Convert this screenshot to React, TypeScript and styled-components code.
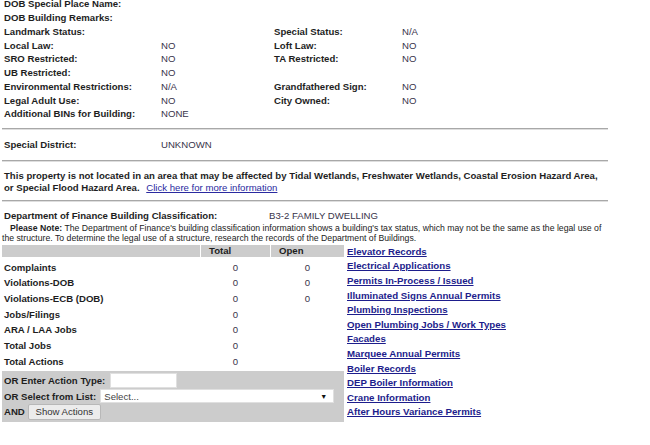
import React from "react";
import styled, { createGlobalStyle } from "styled-components";

const GlobalStyle = createGlobalStyle`
  html, body {
    margin: 0;
    padding: 0;
    background: #ffffff;
  }
  body {
    font-family: "Liberation Sans", Arial, sans-serif;
    font-size: 9.6px;
    color: #1e1e1e;
    overflow: hidden;
  }
`;

const propertyRows: [string, string, string?, string?][] = [
  ["DOB Special Place Name:", ""],
  ["DOB Building Remarks:", ""],
  ["Landmark Status:", "", "Special Status:", "N/A"],
  ["Local Law:", "NO", "Loft Law:", "NO"],
  ["SRO Restricted:", "NO", "TA Restricted:", "NO"],
  ["UB Restricted:", "NO", "", ""],
  ["Environmental Restrictions:", "N/A", "Grandfathered Sign:", "NO"],
  ["Legal Adult Use:", "NO", "City Owned:", "NO"],
  ["Additional BINs for Building:", "NONE"],
];

const stats: [string, string, string][] = [
  ["Complaints", "0", "0"],
  ["Violations-DOB", "0", "0"],
  ["Violations-ECB (DOB)", "0", "0"],
  ["Jobs/Filings", "0", ""],
  ["ARA / LAA Jobs", "0", ""],
  ["Total Jobs", "0", ""],
  ["Total Actions", "0", ""],
];

const links = [
  "Elevator Records",
  "Electrical Applications",
  "Permits In-Process / Issued",
  "Illuminated Signs Annual Permits",
  "Plumbing Inspections",
  "Open Plumbing Jobs / Work Types",
  "Facades",
  "Marquee Annual Permits",
  "Boiler Records",
  "DEP Boiler Information",
  "Crane Information",
  "After Hours Variance Permits",
];

const App = () => {
  return (
    <>
      <GlobalStyle />
      <Page>
        <InfoGrid>
          {propertyRows.map(([l1, v1, l2, v2], i) => (
            <React.Fragment key={i}>
              <Label>{l1}</Label>
              <Value>{v1}</Value>
              <Label>{l2 ?? ""}</Label>
              <Value>{v2 ?? ""}</Value>
            </React.Fragment>
          ))}
        </InfoGrid>
        <Rule $top={7} />
        <PairRow>
          <PairLabel $width={157}>Special District:</PairLabel>
          <Value>UNKNOWN</Value>
        </PairRow>
        <Rule $top={8} />
        <Notice>
          This property is not located in an area that may be affected by Tidal
          Wetlands, Freshwater Wetlands, Coastal Erosion Hazard Area, or Special
          Flood Hazard Area. <NoticeLink href="#">Click here for more information</NoticeLink>
        </Notice>
        <Rule $top={6} />
        <PairRow $top={7}>
          <PairLabel $width={265}>Department of Finance Building Classification:</PairLabel>
          <Value>B3-2 FAMILY DWELLING</Value>
        </PairRow>
        <Note>
          <NoteLead>Please Note:</NoteLead> The Department of Finance's building
          classification information shows a building's tax status, which may not
          be the same as the legal use of the structure. To determine the legal use
          of a structure, research the records of the Department of Buildings.
        </Note>
        <Records>
          <LeftPanel>
            <StatsGrid>
              <HeadCell />
              <HeadCell>Total</HeadCell>
              <HeadCell>Open</HeadCell>
              {stats.map(([name, total, open]) => (
                <React.Fragment key={name}>
                  <StatName>{name}</StatName>
                  <StatNum>{total}</StatNum>
                  <StatNum>{open}</StatNum>
                </React.Fragment>
              ))}
            </StatsGrid>
            <ActionForm>
              <FormRow>
                <FormLabel>OR Enter Action Type:</FormLabel>
                <TextInput type="text" />
              </FormRow>
              <FormRow>
                <FormLabel>OR Select from List:</FormLabel>
                <SelectBox>
                  <span>Select...</span>
                  <Arrow>▼</Arrow>
                </SelectBox>
              </FormRow>
              <FormRow>
                <FormLabel>AND</FormLabel>
                <ShowButton type="button">Show Actions</ShowButton>
              </FormRow>
            </ActionForm>
          </LeftPanel>
          <LinkList>
            {links.map((l) => (
              <RecordLink key={l} href="#">
                {l}
              </RecordLink>
            ))}
          </LinkList>
        </Records>
      </Page>
    </>
  );
};

const Page = styled.div`
  width: 650px;
  margin-top: -3px;
  padding: 0 2px;
  box-sizing: border-box;
`;

const InfoGrid = styled.div`
  display: grid;
  grid-template-columns: 157px 113px 128px 1fr;
  grid-auto-rows: 13.75px;
  align-items: center;
  padding-left: 2px;
`;

const Label = styled.div`
  font-weight: bold;
  color: #1e1e1e;
  white-space: nowrap;
`;

const Value = styled.div`
  color: #38334a;
  white-space: nowrap;
`;

const Rule = styled.hr<{ $top: number }>`
  width: 606px;
  height: 0;
  margin: ${(p) => p.$top}px 0 0 0;
  border: none;
  border-top: 1px solid #a8a8a8;
  border-bottom: 1px solid #dedede;
`;

const PairRow = styled.div<{ $top?: number }>`
  display: flex;
  align-items: center;
  height: 14px;
  margin-top: ${(p) => p.$top ?? 8}px;
  padding-left: 2px;
`;

const PairLabel = styled.div<{ $width: number }>`
  width: ${(p) => p.$width}px;
  flex: none;
  font-weight: bold;
  color: #1e1e1e;
  white-space: nowrap;
`;

const Notice = styled.p`
  margin: 8px 0 0 0;
  padding-left: 2px;
  width: 602px;
  line-height: 12px;
  font-weight: bold;
  color: #1e1e1e;
`;

const NoticeLink = styled.a`
  font-weight: normal;
  color: #2a2aa0;
  text-decoration: underline;
  margin-left: 4px;
`;

const Note = styled.p`
  margin: 0;
  width: 603px;
  text-indent: 8px;
  line-height: 10px;
  font-size: 8.7px;
  color: #222;
`;

const NoteLead = styled.b`
  font-weight: bold;
`;

const Records = styled.div`
  display: flex;
  margin-top: 2px;
`;

const LeftPanel = styled.div`
  width: 342px;
  display: flex;
  flex-direction: column;
`;

const StatsGrid = styled.div`
  display: grid;
  grid-template-columns: 198px 69px 73px;
  grid-template-rows: 14.6px;
  grid-auto-rows: 15.7px;
  column-gap: 1px;
  align-items: center;
`;

const HeadCell = styled.div`
  align-self: start;
  background: #cccccc;
  height: 12px;
  line-height: 12px;
  padding-left: 8px;
  font-weight: bold;
  color: #1e1e1e;
`;

const StatName = styled.div`
  padding-left: 2px;
  font-weight: bold;
  color: #1e1e1e;
  white-space: nowrap;
`;

const StatNum = styled.div`
  text-align: center;
  color: #38334a;
`;

const ActionForm = styled.div`
  margin-top: 2px;
  background: #cccccc;
  padding: 2px;
  display: flex;
  flex-direction: column;
`;

const FormRow = styled.div`
  display: flex;
  align-items: center;
  height: 15.5px;
  gap: 3px;
`;

const FormLabel = styled.span`
  font-weight: bold;
  color: #1e1e1e;
  white-space: nowrap;
`;

const TextInput = styled.input`
  width: 67px;
  height: 15px;
  margin-left: 2px;
  box-sizing: border-box;
  border: 1px solid #e0e0e0;
  background: #fff;
  padding: 0 2px;
  font-size: 9.6px;
  outline: none;
`;

const SelectBox = styled.div`
  width: 234px;
  height: 14px;
  margin-left: 1px;
  box-sizing: border-box;
  background: #fff;
  border: 1px solid #e0e0e0;
  display: flex;
  align-items: center;
  justify-content: space-between;
  padding: 0 6px 0 3px;
  color: #444;
  font-size: 9.6px;
`;

const Arrow = styled.span`
  font-size: 7px;
  color: #111;
`;

const ShowButton = styled.button`
  height: 16px;
  width: 73px;
  padding: 0;
  box-sizing: border-box;
  border: 1px solid #b8b8b8;
  border-radius: 2px;
  background: #ececec;
  color: #333;
  font-family: "Liberation Sans", Arial, sans-serif;
  font-size: 9.6px;
`;

const LinkList = styled.div`
  display: flex;
  flex-direction: column;
  padding-left: 3px;
`;

const RecordLink = styled.a`
  display: block;
  line-height: 14.6px;
  font-size: 9.7px;
  font-weight: bold;
  color: #1d1d8c;
  text-decoration: underline;
  white-space: nowrap;
`;

export default App;
